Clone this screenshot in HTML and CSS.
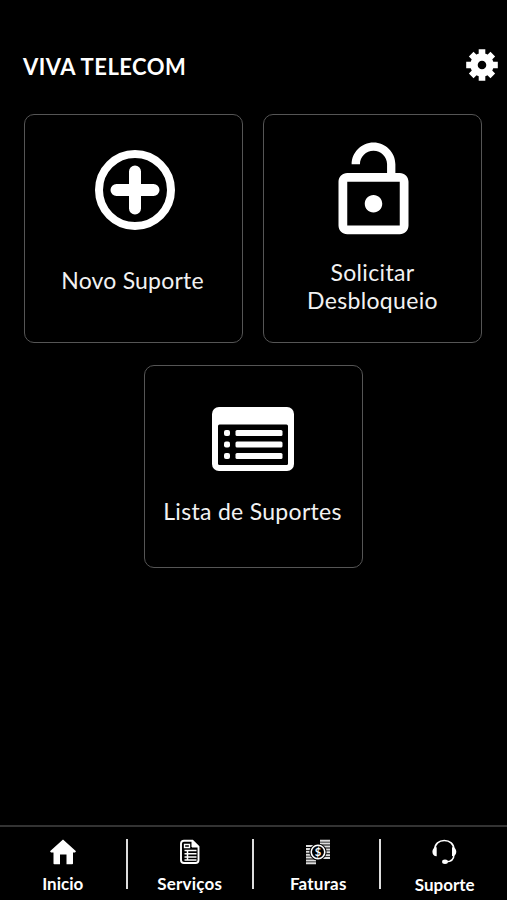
FILE: index.html
```html
<!doctype html>
<html lang="pt-BR">
  <head>
    <meta charset="UTF-8" />
    <meta name="viewport" content="width=device-width, initial-scale=1.0" />
    <title>Viva Telecom - Suporte</title>
    <link rel="stylesheet" href="styles.css">
  </head>
  <body>
    <header class="header">
      <h1>VIVA TELECOM</h1>
      <button class="settings" type="button" aria-label="Configurações">
        <svg width="32" height="32" viewBox="-16 -16 32 32">
          <g stroke="#fff" stroke-width="6.6">
            <path d="M0-15.8V-6M0 6v9.8M-15.8 0H-6M6 0h9.8" />
            <path d="M-10.8-10.8l5 5M5.8 5.8l5 5M10.8-10.8l-5 5M-5.8 5.8l-5 5" />
          </g>
          <circle r="8" fill="none" stroke="#fff" stroke-width="7.4" />
        </svg>
      </button>
    </header>

    <main class="cards">
      <a class="card" href="#">
        <span class="card-icon">
          <svg width="80" height="80" viewBox="0 0 80 80" fill="none" stroke="#fff">
            <circle cx="40" cy="40" r="36" stroke-width="8" />
            <path d="M40 21.5v37M21.5 40h37" stroke-width="12" stroke-linecap="round" />
          </svg>
        </span>
        <span class="card-label novo">Novo Suporte</span>
      </a>

      <a class="card" href="#">
        <span class="card-icon">
          <svg width="105" height="105" viewBox="0 0 24 24" fill="#fff">
            <path d="M12 17c1.1 0 2-.9 2-2s-.9-2-2-2-2 .9-2 2 .9 2 2 2zm6-9h-1V6c0-2.76-2.24-5-5-5S7 3.24 7 6h1.9c0-1.71 1.39-3.1 3.1-3.1s3.1 1.39 3.1 3.1v2H6c-1.1 0-2 .9-2 2v10c0 1.1.9 2 2 2h12c1.1 0 2-.9 2-2V10c0-1.1-.9-2-2-2zm0 12H6V10h12v10z" />
          </svg>
        </span>
        <span class="card-label desbloqueio">Solicitar<br>Desbloqueio</span>
      </a>

      <a class="card card-short" href="#">
        <span class="card-icon">
          <svg width="82" height="64" viewBox="0 0 82 64" fill="#fff">
            <rect width="82" height="64" rx="7" />
            <rect x="6" y="17.5" width="70" height="40.5" rx="1.5" fill="#000" />
            <rect x="12" y="23" width="6" height="6" rx="2" />
            <rect x="23.5" y="23" width="47" height="6" rx="1.5" />
            <rect x="12" y="34.5" width="6" height="6" rx="2" />
            <rect x="23.5" y="34.5" width="47" height="6" rx="1.5" />
            <rect x="12" y="46" width="6" height="6" rx="2" />
            <rect x="23.5" y="46" width="47" height="6" rx="1.5" />
          </svg>
        </span>
        <span class="card-label lista">Lista de Suportes</span>
      </a>
    </main>

    <nav class="tabbar">
      <a class="tab" href="#">
        <svg width="26" height="26" viewBox="0 0 26 26" fill="#fff">
          <path d="M13 .5L26 12.2l-1 1.3h-2V24.5q0 .8-.8.8H16.5V15.5H10v9.8H4.300q-.8 0-.8-.8V13.5H1L0 12.2z" />
        </svg>
        <span>Inicio</span>
      </a>
      <a class="tab tab-servicos" href="#">
        <svg width="20" height="26" viewBox="0 0 20 26" fill="none" stroke="#fff">
          <path d="M4 1.7h8.500l6 6V21q0 3-3 3H4q-3 0-3-3V4.700q0-3 3-3z" stroke-width="1.9" />
          <path d="M12 1.5v6.500h6.700z" fill="#fff" />
          <path d="M4.500 5.500h5v3h-5z" stroke-width="1.300" />
          <path d="M4.500 11.500h12M4.500 14.800h12M4.500 18h12M4.500 21h12M7.500 11v10.500" stroke-width="1.500" />
        </svg>
        <span>Serviços</span>
      </a>
      <a class="tab tab-faturas" href="#">
        <svg width="24" height="26" viewBox="0 0 24 26">
          <path d="M14 1.700h10M14 4.600h10M14 7.500h10M16 10.400h8M16 13.300h8M16 16.200h8M14 19h10M0 7h10M0 9.900h8M0 12.800h8M0 15.700h8M0 18.600h10M0 21.500h10M0 24.300h10" stroke="#ddd" stroke-width="2" />
          <circle cx="12" cy="13" r="8.600" fill="#000" />
          <circle cx="12" cy="13" r="6.800" fill="#000" stroke="#fff" stroke-width="1.600" />
          <text class="coin" x="12" y="16.800" text-anchor="middle">$</text>
        </svg>
        <span>Faturas</span>
      </a>
      <a class="tab tab-suporte" href="#">
        <svg width="25" height="26" viewBox="0 0 25 26" fill="none" stroke="#fff">
          <path d="M2.700 11C2.700 4.800 7 1.500 12.300 1.500S22 4.800 22 11" stroke-width="1.600" />
          <path d="M22 15.500c0 4-2.500 7.300-8 7.300" stroke-width="1.400" />
          <path d="M4.700 8.300v9C2 17.300.4 15.500.4 12.800s1.600-4.500 4.300-4.500zM20 8.300v9c2.700 0 4.300-1.800 4.300-4.500S22.700 8.300 20 8.300z" fill="#fff" stroke="none" />
          <ellipse cx="13" cy="22.800" rx="2.900" ry="2.200" fill="#fff" stroke="none" />
        </svg>
        <span>Suporte</span>
      </a>
    </nav>
  </body>
</html>
```
FILE: styles.css
```css
* {
  box-sizing: border-box;
}
body {
  display: flex;
  flex-direction: column;
  height: 100vh;
  margin: 0;
  background: #000;
  color: #fff;
  font-family: Lato, "Open Sans", sans-serif;
}
a {
  color: inherit;
  text-decoration: none;
}
svg {
  display: block;
  flex-shrink: 0;
}
.header {
  display: flex;
  align-items: center;
  justify-content: space-between;
  height: 66px;
  margin-top: 32px;
  padding: 0 9px 1px 23px;
}
.header h1 {
  margin: 4px 0 0;
  font-size: 22px;
  font-weight: 700;
  letter-spacing: 0.5px;
}
.settings {
  padding: 0;
  border: none;
  background: none;
  cursor: pointer;
}
.cards {
  display: flex;
  flex-wrap: wrap;
  align-content: flex-start;
  justify-content: center;
  gap: 22px 20px;
  flex: 1;
  padding: 16px 24px 0 23px;
}
.card {
  display: flex;
  flex-direction: column;
  align-items: center;
  width: 219px;
  height: 229px;
  border: 1px solid #555;
  border-radius: 10px;
}
.card-icon {
  display: flex;
  align-items: center;
  justify-content: center;
  height: 150px;
  padding-left: 2px;
}
.card-label {
  color: #f2f2f2;
  font-size: 23px;
  line-height: 28px;
  text-align: center;
  white-space: nowrap;
}
.novo {
  padding: 1px 2px 0 0;
  letter-spacing: 0.2px;
}
.desbloqueio {
  margin-top: -7px;
  letter-spacing: 0.35px;
}
.card-short {
  height: 203px;
}
.card-short .card-icon {
  height: 146px;
  padding-left: 0;
}
.lista {
  margin-top: -15px;
  padding-right: 1px;
  letter-spacing: 0.3px;
}
.tabbar {
  display: flex;
  height: 75px;
  border-top: 2px solid #333;
}
.tab {
  display: flex;
  flex-direction: column;
  align-items: center;
  gap: 9px;
  width: 127px;
  height: 50px;
  margin-top: 12px;
  font-size: 17px;
  font-weight: 700;
  line-height: 20px;
  border-right: 2px solid #ddd;
}
.tab:first-child {
  width: 128px;
}
.tab:last-child {
  border-right: none;
}
.tab-servicos,
.tab-faturas {
  letter-spacing: 0.2px;
}
.tab-faturas {
  padding-left: 4px;
}
.tab-suporte {
  gap: 10px;
  padding-left: 2px;
}
.coin {
  fill: #fff;
  font-size: 11px;
  font-weight: 700;
}
```
